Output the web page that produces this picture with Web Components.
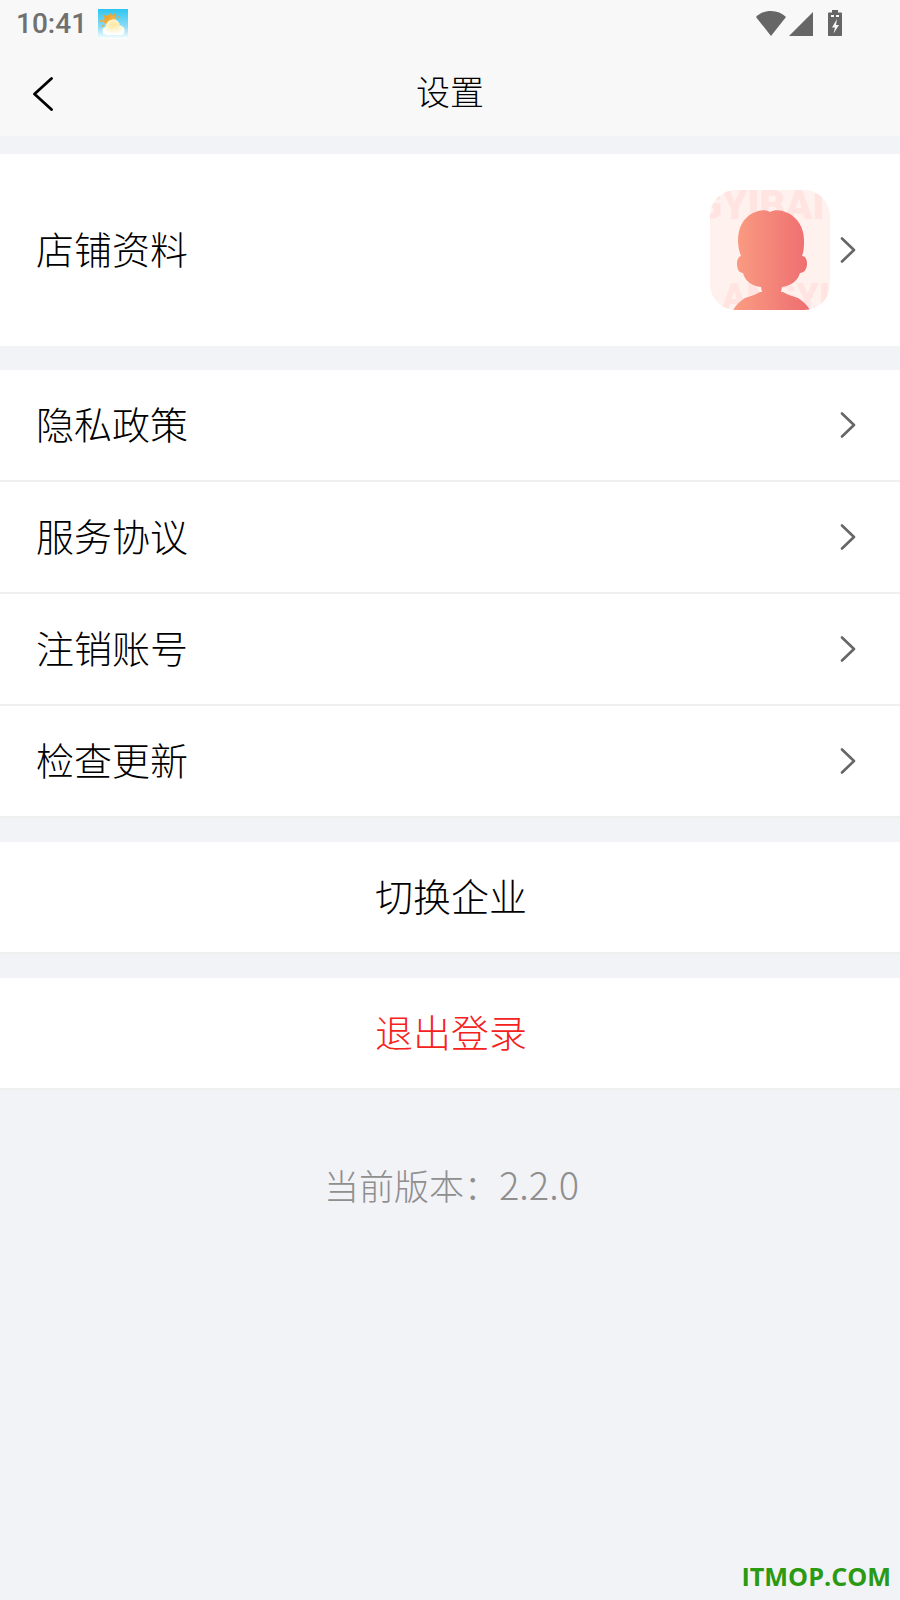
<!DOCTYPE html>
<html lang="zh">
<head>
<meta charset="utf-8">
<title>设置</title>
<style>
  html, body { margin: 0; padding: 0; }
  body { background: #f2f3f7; font-family: "Noto Sans CJK SC", "Noto Sans", sans-serif; }
  settings-page { min-height: 1600px; }
</style>
</head>
<body>
<settings-page>
  <status-bar slot="top"></status-bar>
  <nav-bar slot="top">设置</nav-bar>

  <setting-row tall style="margin-top:18px">店铺资料<shop-avatar slot="extra"></shop-avatar></setting-row>

  <setting-row divider style="margin-top:24px">隐私政策</setting-row>
  <setting-row divider>服务协议</setting-row>
  <setting-row divider>注销账号</setting-row>
  <setting-row divider>检查更新</setting-row>

  <action-row style="margin-top:24px">切换企业</action-row>
  <action-row danger style="margin-top:24px">退出登录</action-row>

  <version-note><span style="font-size:35px">当前版本：</span>2.2.0</version-note>
</settings-page>

<script>
class SettingsPage extends HTMLElement {
  connectedCallback() {
    this.attachShadow({ mode: 'open' });
    this.shadowRoot.innerHTML = `
      <style>
        :host { display: block; position: relative; height: 1600px; overflow: hidden; background: #f2f3f7; }
        .top { background: #f8f8f8; height: 136px; display: flex; flex-direction: column; }
        .mark {
          position: absolute; right: 9px; bottom: 9px;
          font: 700 25.200px/30px "Open Sans", sans-serif;
          color: #2a9a12;
        }
      </style>
      <div class="top"><slot name="top"></slot></div>
      <slot></slot>
      <div class="mark">ITMOP.COM</div>
    `;
  }
}

class StatusBar extends HTMLElement {
  connectedCallback() {
    this.attachShadow({ mode: 'open' });
    this.shadowRoot.innerHTML = `
      <style>
        :host { display: flex; align-items: center; height: 48px; padding: 0 54px 0 16px; color: #707070; }
        .time { font: 500 28px/48px Roboto, sans-serif; }
        .weather { margin-left: 11px; display: block; }
        .icons { margin-left: auto; display: block; }
      </style>
      <span class="time">10:41</span>
      <svg class="weather" width="30" height="30" viewBox="0 0 30 30">
        <defs>
          <linearGradient id="sky" x1="0" y1="0" x2="0" y2="1">
            <stop offset="0" stop-color="#2cc6f3"/>
            <stop offset=".6" stop-color="#8fdcf5"/>
            <stop offset="1" stop-color="#ffffff"/>
          </linearGradient>
          <linearGradient id="sun" x1="0" y1="0" x2="1" y2="1">
            <stop offset="0" stop-color="#f29a1c"/>
            <stop offset="1" stop-color="#fcc65a"/>
          </linearGradient>
          <radialGradient id="cloud" cx=".5" cy=".35" r=".6">
            <stop offset="0" stop-color="#fde79a"/>
            <stop offset="1" stop-color="#ffffff"/>
          </radialGradient>
        </defs>
        <rect width="30" height="30" fill="url(#sky)"/>
        <g stroke="#f5a623" stroke-width="1.400">
          <path d="M12 7V4M7 8L5 5.500M5 12H2M6 16l-2.500 1.500M16 7l1.500-3M19 9l2.500-1.500"/>
        </g>
        <circle cx="12" cy="11.500" r="6" fill="url(#sun)"/>
        <path d="M9 26c-3 0-4.500-2-4.500-4.200 0-2 1.300-3.400 3-3.800.300-3 2-6 5-7 3-1.200 6-.8 8 2 .800 1 1.200 2.200 1.200 3.300 2.300.200 4.800 2 4.800 4.900S25.500 26 23 26z" fill="url(#cloud)"/>
      </svg>
      <svg class="icons" width="90" height="28" viewBox="0 0 90 28" fill="#666">
        <path d="M0 7C4 3 9 1 15 1s11 2 15 6L15 26z"/>
        <path d="M33 26L57 2v24z"/>
        <path fill-rule="evenodd" d="M76 0h6v2.500h3c.800 0 1 .500 1 1V25c0 .500-.300 1-1 1H73c-.700 0-1-.500-1-1V3.500c0-.500.200-1 1-1h3zM75 5v2h3V5zm5 0v2h3V5zm1 4l-5 8.500h3l-1.500 6 5.500-8.500h-3z"/>
      </svg>
    `;
  }
}

class NavBar extends HTMLElement {
  connectedCallback() {
    this.attachShadow({ mode: 'open' });
    this.shadowRoot.innerHTML = `
      <style>
        :host { display: grid; grid-template-columns: 100px 1fr 100px; align-items: center; height: 88px; color: #000; }
        svg { display: block; margin: 1px 0 0 33px; }
        .title { text-align: center; font-size: 34px; font-weight: 300; line-height: 86px; padding-bottom: 5px; }
      </style>
      <svg width="20" height="34" viewBox="0 0 20 34" fill="none" stroke="#000" stroke-width="2.800" stroke-linecap="round" stroke-linejoin="round">
        <path d="M18.500 1.500L1.500 17l17 15.500"/>
      </svg>
      <div class="title"><slot></slot></div>
      <div></div>
    `;
  }
}

const chevron = `
  <svg class="chev" width="16" height="26" viewBox="0 0 16 26" fill="none" stroke="#666" stroke-width="2.600" stroke-linecap="round" stroke-linejoin="round">
    <path d="M2 1.500L14 13 2 24.500"/>
  </svg>`;

class SettingRow extends HTMLElement {
  connectedCallback() {
    this.attachShadow({ mode: 'open' });
    this.shadowRoot.innerHTML = `
      <style>
        :host {
          display: flex; align-items: center; box-sizing: border-box; height: 112px;
          padding: 0 44px 0 36px; background: #fff; color: #000;
          font-size: 38px; font-weight: 300; border-bottom: 2px solid #f0f0f0;
        }
        :host([tall]) { height: 192px; border-bottom: 0; }
        .label { flex: 1; padding-bottom: 6px; }
        .chev { display: block; margin-left: 10px; }
      </style>
      <span class="label"><slot></slot></span>
      <slot name="extra"></slot>
      ${chevron}
    `;
  }
}

class ActionRow extends HTMLElement {
  connectedCallback() {
    this.attachShadow({ mode: 'open' });
    this.shadowRoot.innerHTML = `
      <style>
        :host {
          display: flex; align-items: center; justify-content: center; box-sizing: border-box; height: 112px;
          padding: 0 0 6px 2px; background: #fff; color: #000; font-size: 38px; font-weight: 300;
          border-bottom: 2px solid #f0f0f0;
        }
        :host([danger]) { color: #f5221c; }
      </style>
      <slot></slot>
    `;
  }
}

class ShopAvatar extends HTMLElement {
  connectedCallback() {
    this.attachShadow({ mode: 'open' });
    this.shadowRoot.innerHTML = `
      <style>
        :host { display: block; position: relative; width: 120px; height: 120px; border-radius: 26px; overflow: hidden; background: #fff1ee; }
        .wm {
          position: absolute; white-space: nowrap; color: #ffe4e2;
          font: 900 40px/44px Roboto, sans-serif;
        }
        .a { left: -15px; top: -6px; }
        .b { left: 12px; top: 85px; font-size: 36px; }
        svg { position: absolute; left: 0; top: 0; display: block; }
      </style>
      <span class="wm a">GYIBAI</span>
      <span class="wm b">ANGYIBAI</span>
      <svg width="120" height="120" viewBox="0 0 120 120">
        <defs>
          <linearGradient id="fig" x1="0" y1="0" x2="1" y2="0">
            <stop offset="0" stop-color="#fa9d82"/>
            <stop offset="1" stop-color="#ee6d70"/>
          </linearGradient>
        </defs>
        <path fill="url(#fig)" d="M60 22C65 19 72 20 78 23C88 28 94 38 94 50C94 56 94 61 92 66C96 66 97 70 97 74C97 79 94 83 90 83C88 91 80 96 72 97L71 102L73 102C78 105 83 106 88 108C93 111 97 115 100 120H23C26 115 30 111 35 108C40 106 45 105 50 102L52 102L51 97C42 96 35 91 33 83C29 83 27 79 27 74C27 70 28 67 31 66C29 61 28 56 28 50C28 38 33 28 43 23C49 20 55 19 60 22Z"/>
      </svg>
    `;
  }
}

class VersionNote extends HTMLElement {
  connectedCallback() {
    this.attachShadow({ mode: 'open' });
    this.shadowRoot.innerHTML = `
      <style>
        :host { display: block; margin-top: 66px; padding-left: 3px; text-align: center; color: #8f8f8f; font-size: 38px; font-weight: 300; line-height: 56px; }
      </style>
      <slot></slot>
    `;
  }
}

customElements.define('settings-page', SettingsPage);
customElements.define('status-bar', StatusBar);
customElements.define('nav-bar', NavBar);
customElements.define('setting-row', SettingRow);
customElements.define('action-row', ActionRow);
customElements.define('shop-avatar', ShopAvatar);
customElements.define('version-note', VersionNote);
</script>
</body>
</html>
